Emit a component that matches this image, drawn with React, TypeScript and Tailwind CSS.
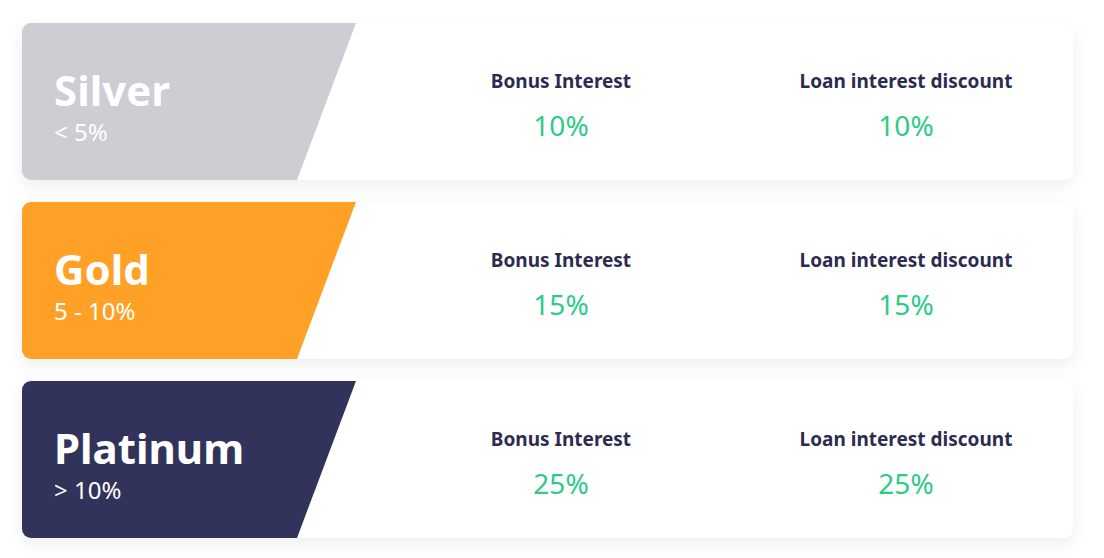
const tiers = [
  { name: "Silver", range: "< 5%", bg: "bg-[#cdcdd3]", bonus: "10%", loan: "10%" },
  { name: "Gold", range: "5 - 10%", bg: "bg-[#fea126]", bonus: "15%", loan: "15%" },
  { name: "Platinum", range: "> 10%", bg: "bg-[#32335a]", bonus: "25%", loan: "25%" },
];

const Stat = ({ label, value }: { label: string; value: string }) => (
  <div className="w-[300px] flex flex-col items-center">
    <span className="text-[19px] font-bold text-[#2d2b50] leading-[26px]">{label}</span>
    <span className="text-[28px] text-[#2dcb86] leading-[36px] mt-[13px]">{value}</span>
  </div>
);

const App = () => {
  return (
    <div className="min-h-screen bg-white pt-[23px] px-[22px] font-['Noto_Sans',sans-serif]">
      <div className="flex flex-col gap-[22px] w-[1051px]">
        {tiers.map((t) => (
          <div
            key={t.name}
            className="flex h-[157px] bg-white rounded-[9px] shadow-[0_6px_18px_rgba(0,0,0,0.07)] overflow-hidden"
          >
            <div
              className={`${t.bg} w-[334px] shrink-0 flex flex-col justify-center pl-[32px] pt-[10px] [clip-path:polygon(0_0,334px_0,275px_100%,0_100%)]`}
            >
              <span className="text-[42px] font-bold text-white leading-[48px]">{t.name}</span>
              <span className="text-[24px] text-white leading-[30px] mt-[3px]">{t.range}</span>
            </div>
            <div className="flex-1 flex pl-[55px] pt-[8px] items-center gap-[45px]">
              <Stat label="Bonus Interest" value={t.bonus} />
              <Stat label="Loan interest discount" value={t.loan} />
            </div>
          </div>
        ))}
      </div>
    </div>
  );
};

export default App;
